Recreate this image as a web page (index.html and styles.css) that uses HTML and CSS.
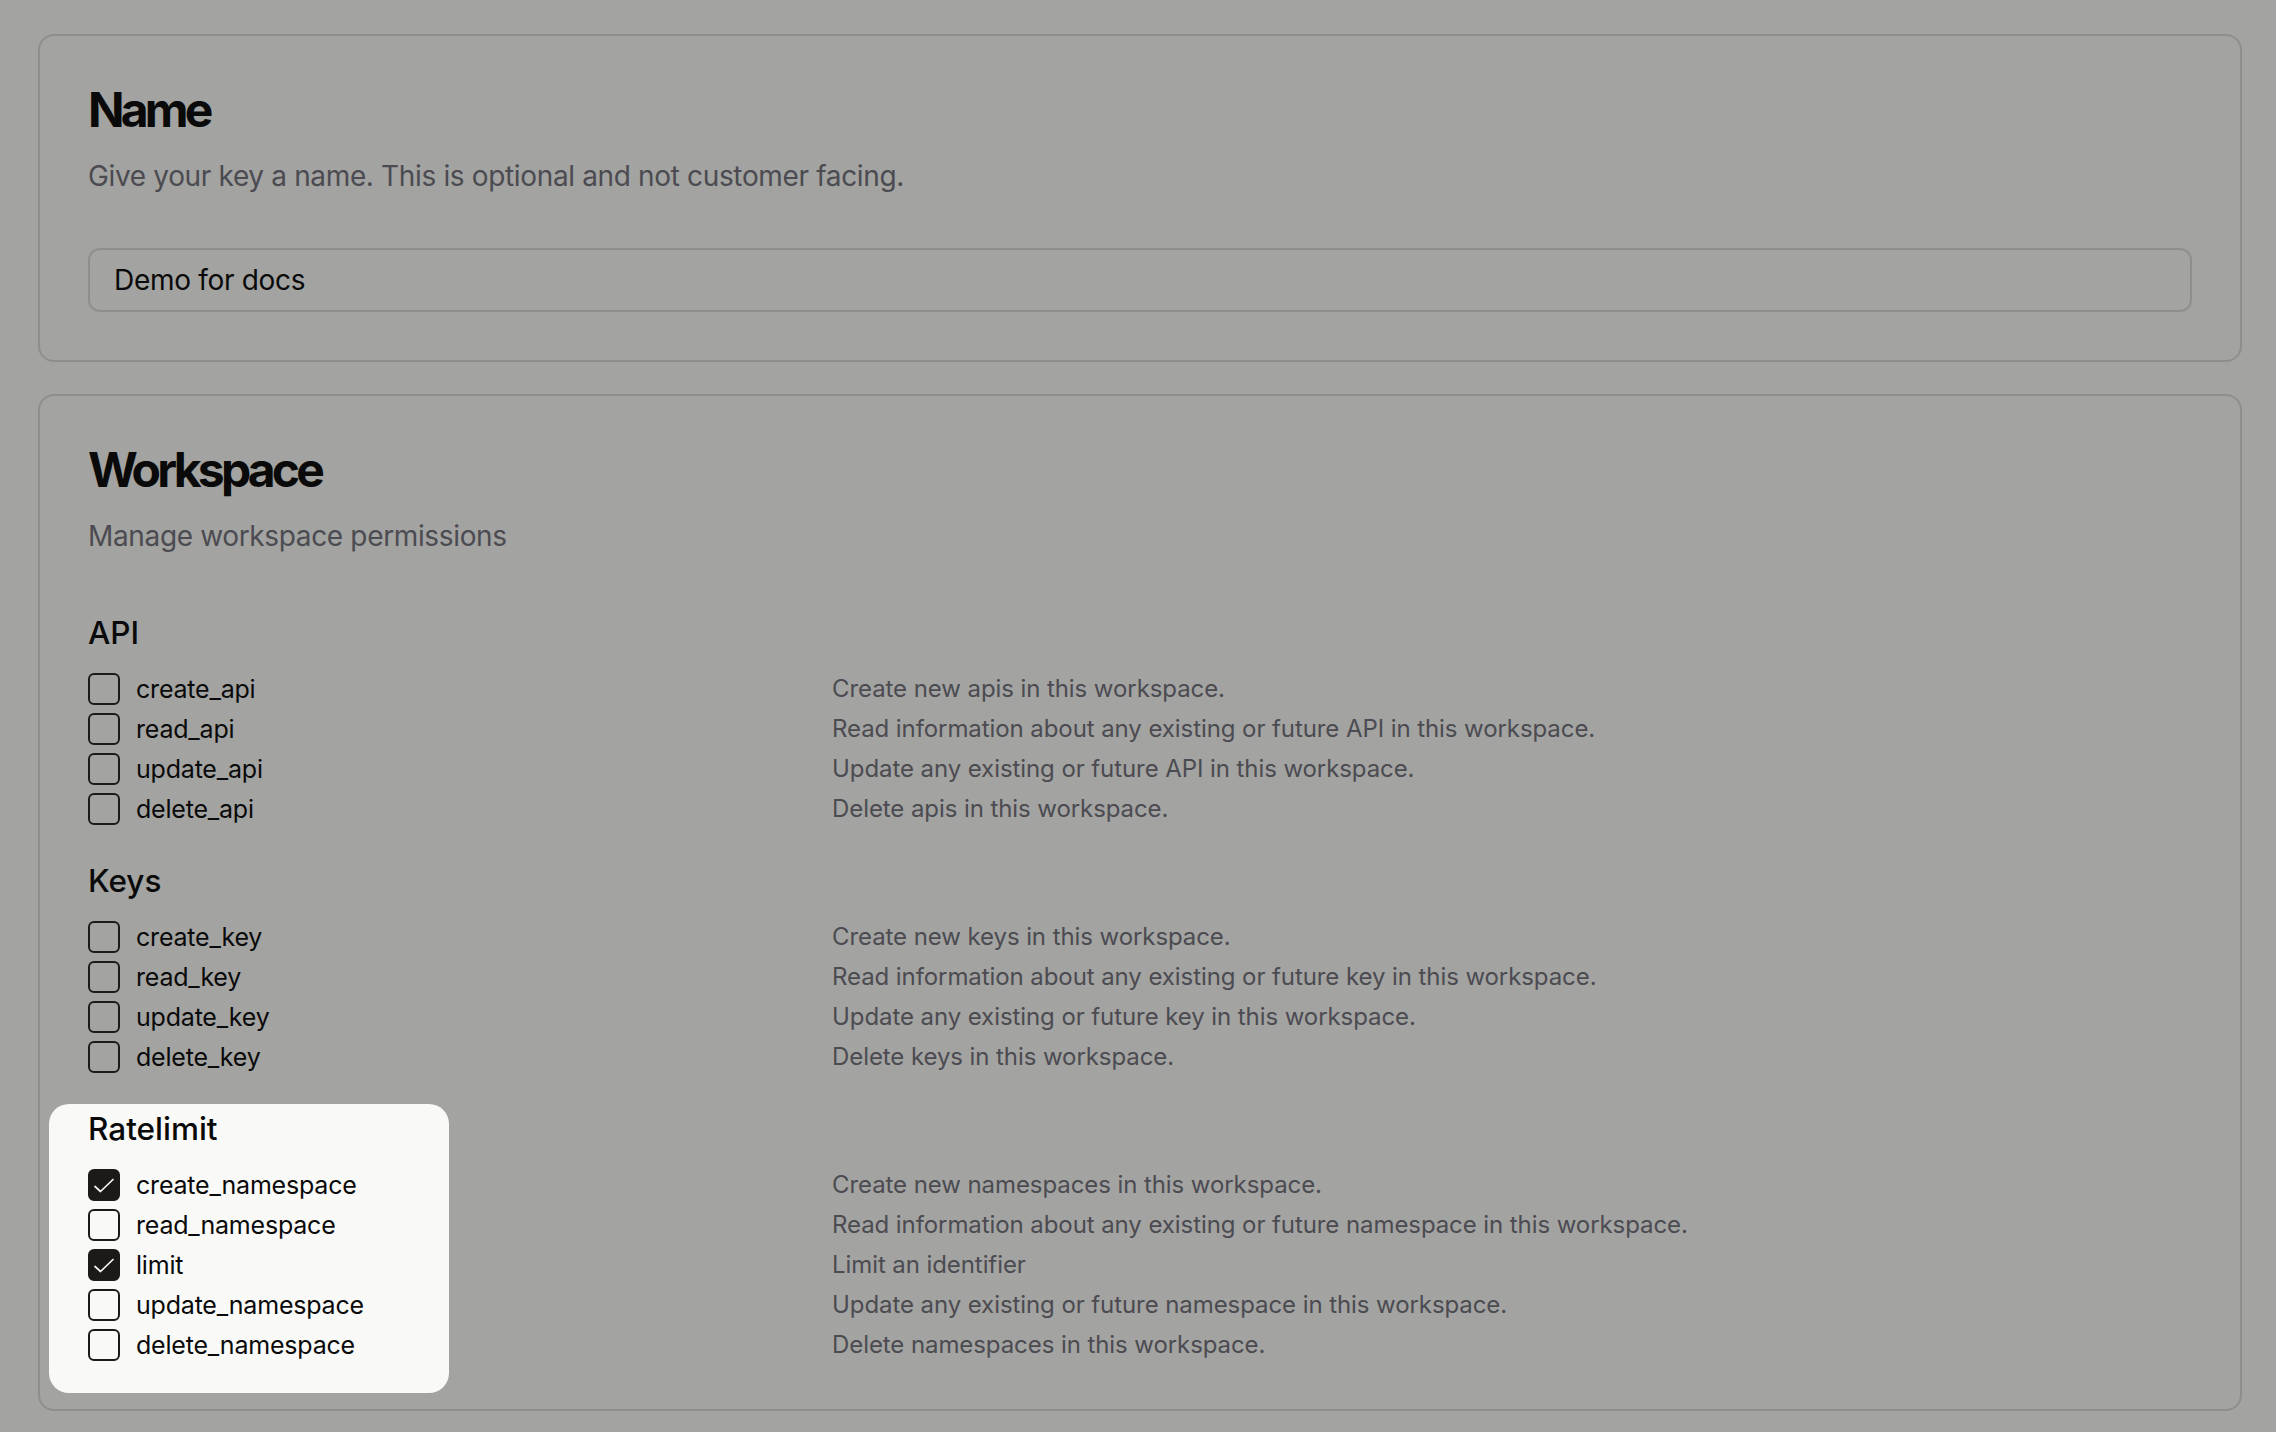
FILE: index.html
```html
<!DOCTYPE html>
<html lang="en">
<head>
<meta charset="utf-8">
<title>Create key</title>
<link rel="stylesheet" href="styles.css">
</head>
<body>
<main class="page">
  <section class="card">
    <h2 class="card-title">Name</h2>
    <p class="card-desc">Give your key a name. This is optional and not customer facing.</p>
    <input class="text-input" type="text" value="Demo for docs">
  </section>

  <section class="card">
    <h2 class="card-title">Workspace</h2>
    <p class="card-desc">Manage workspace permissions</p>

    <div class="groups">
      <div class="group">
        <h3 class="group-title">API</h3>
        <ul class="perm-list">
          <li class="perm"><span class="perm-left"><span class="box"></span><span class="perm-name">create_api</span></span><span class="perm-desc">Create new apis in this workspace.</span></li>
          <li class="perm"><span class="perm-left"><span class="box"></span><span class="perm-name">read_api</span></span><span class="perm-desc">Read information about any existing or future API in this workspace.</span></li>
          <li class="perm"><span class="perm-left"><span class="box"></span><span class="perm-name">update_api</span></span><span class="perm-desc">Update any existing or future API in this workspace.</span></li>
          <li class="perm"><span class="perm-left"><span class="box"></span><span class="perm-name">delete_api</span></span><span class="perm-desc">Delete apis in this workspace.</span></li>
        </ul>
      </div>

      <div class="group">
        <h3 class="group-title">Keys</h3>
        <ul class="perm-list">
          <li class="perm"><span class="perm-left"><span class="box"></span><span class="perm-name">create_key</span></span><span class="perm-desc">Create new keys in this workspace.</span></li>
          <li class="perm"><span class="perm-left"><span class="box"></span><span class="perm-name">read_key</span></span><span class="perm-desc">Read information about any existing or future key in this workspace.</span></li>
          <li class="perm"><span class="perm-left"><span class="box"></span><span class="perm-name">update_key</span></span><span class="perm-desc">Update any existing or future key in this workspace.</span></li>
          <li class="perm"><span class="perm-left"><span class="box"></span><span class="perm-name">delete_key</span></span><span class="perm-desc">Delete keys in this workspace.</span></li>
        </ul>
      </div>

      <div class="group group-highlight">
        <h3 class="group-title">Ratelimit</h3>
        <ul class="perm-list">
          <li class="perm"><span class="perm-left"><span class="box box-checked"><svg viewBox="0 0 32 32" class="check"><path d="M7 17.5 L12.5 22.5 L25 10.5"/></svg></span><span class="perm-name">create_namespace</span></span><span class="perm-desc">Create new namespaces in this workspace.</span></li>
          <li class="perm"><span class="perm-left"><span class="box"></span><span class="perm-name">read_namespace</span></span><span class="perm-desc">Read information about any existing or future namespace in this workspace.</span></li>
          <li class="perm"><span class="perm-left"><span class="box box-checked"><svg viewBox="0 0 32 32" class="check"><path d="M7 17.5 L12.5 22.5 L25 10.5"/></svg></span><span class="perm-name">limit</span></span><span class="perm-desc">Limit an identifier</span></li>
          <li class="perm"><span class="perm-left"><span class="box"></span><span class="perm-name">update_namespace</span></span><span class="perm-desc">Update any existing or future namespace in this workspace.</span></li>
          <li class="perm"><span class="perm-left"><span class="box"></span><span class="perm-name">delete_namespace</span></span><span class="perm-desc">Delete namespaces in this workspace.</span></li>
        </ul>
      </div>
    </div>
  </section>
</main>
</body>
</html>
```

FILE: styles.css
```css
* { box-sizing: border-box; }

html, body {
  margin: 0;
  padding: 0;
  background: #a3a3a1;
}

body {
  font-family: Inter, "Noto Sans", "Liberation Sans", sans-serif;
  color: #0b0b0b;
}

.page {
  padding: 34px 34px 0 38px;
  display: flex;
  flex-direction: column;
  gap: 32px;
}

.card {
  border: 2px solid #8e8e8c;
  border-radius: 16px;
  padding: 48px;
  display: flex;
  flex-direction: column;
}

.card-title {
  margin: 0;
  font-size: 48px;
  line-height: 52px;
  font-weight: 700;
  letter-spacing: -3.8px;
  color: #0a0a0a;
}

.card-desc {
  margin: 20px 0 0 0;
  font-size: 28px;
  line-height: 40px;
  letter-spacing: -0.35px;
  color: #4b4b51;
}

.text-input {
  margin-top: 52px;
  height: 64px;
  width: 100%;
  border: 2px solid #8e8e8c;
  border-radius: 12px;
  background: transparent;
  padding: 0 24px;
  font-family: inherit;
  font-size: 28px;
  letter-spacing: -0.3px;
  color: #0a0a0a;
  outline: none;
}

.groups {
  margin-top: 55px;
  display: flex;
  flex-direction: column;
  gap: 34px;
}

.group {
  display: flex;
  flex-direction: column;
}

.group-highlight {
  position: relative;
  isolation: isolate;
}

.group-highlight::before {
  content: "";
  position: absolute;
  left: -39px;
  top: -3px;
  width: 400px;
  bottom: -32px;
  background: #f9f9f7;
  border-radius: 20px;
  z-index: -1;
}

.group-title {
  margin: 0 0 18px 0;
  font-size: 31.5px;
  line-height: 44px;
  font-weight: 500;
  color: #0a0a0a;
}

.perm-list {
  list-style: none;
  margin: 0;
  padding: 0;
  display: flex;
  flex-direction: column;
  gap: 8px;
}

.perm {
  display: grid;
  grid-template-columns: 744px 1fr;
  align-items: center;
  height: 32px;
}

.perm-left {
  display: flex;
  align-items: center;
  gap: 16px;
}

.box {
  width: 32px;
  height: 32px;
  flex: none;
  border: 2px solid #1c1a19;
  border-radius: 6px;
  display: flex;
  align-items: center;
  justify-content: center;
}

.box-checked {
  background: #1c1a19;
}

.check {
  width: 32px;
  height: 32px;
  margin: -2px;
  fill: none;
  stroke: #f5f5f4;
  stroke-width: 1.7;
  stroke-linecap: round;
  stroke-linejoin: round;
}

.perm-name {
  font-size: 25px;
  line-height: 32px;
  letter-spacing: -0.2px;
  color: #0a0a0a;
}

.perm-desc {
  font-size: 24px;
  line-height: 32px;
  letter-spacing: -0.08px;
  color: #4b4b51;
}
```
